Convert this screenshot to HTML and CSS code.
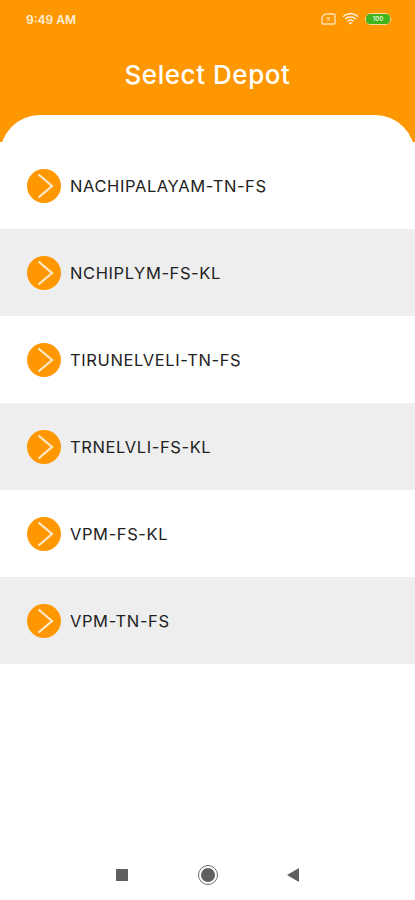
FILE: index.html
```html
<!DOCTYPE html>
<html>
<head>
  <title>Select Depot</title>
  <link rel="stylesheet" href="styles.css">
</head>
<body>
  <div class="screen">
    <div class="header">
      <div class="status-bar">
        <span class="clock">9:49 AM</span>
        <div class="status-icons">
          <svg class="icon-sim" width="15" height="12" viewBox="0 0 15 12">
            <path d="M4 1h9a1 1 0 0 1 1 1v8a1 1 0 0 1-1 1H2a1 1 0 0 1-1-1V4z" fill="none" stroke="#ffe2b3" stroke-width="1.4"/>
            <path d="M6 4.5l3 3M9 4.5l-3 3" stroke="#ffe2b3" stroke-width="1.2"/>
          </svg>
          <svg class="icon-wifi" width="17" height="12" viewBox="0 0 17 12">
            <path d="M1 3.6a11 11 0 0 1 15 0M3.2 6a7.8 7.8 0 0 1 10.6 0M5.4 8.3a4.6 4.6 0 0 1 6.2 0" fill="none" stroke="#fff" stroke-width="1.2"/>
            <path d="M6.9 9.9a2.4 2.4 0 0 1 3.2 0L8.5 11.6z" fill="#fff"/>
          </svg>
          <div class="battery"><span class="battery-fill">100</span></div>
        </div>
      </div>
      <h1 class="title">Select Depot</h1>
      <div class="sheet-top"></div>
    </div>

    <div class="depot-list">
      <div class="depot-row">
        <svg class="arrow" viewBox="0 0 34 34"><circle cx="17" cy="17" r="17"/><path d="M11.5 5.5L25 17 11.5 28.5"/></svg>
        <span class="depot-name">NACHIPALAYAM-TN-FS</span>
      </div>
      <div class="depot-row">
        <svg class="arrow" viewBox="0 0 34 34"><circle cx="17" cy="17" r="17"/><path d="M11.5 5.5L25 17 11.5 28.5"/></svg>
        <span class="depot-name">NCHIPLYM-FS-KL</span>
      </div>
      <div class="depot-row">
        <svg class="arrow" viewBox="0 0 34 34"><circle cx="17" cy="17" r="17"/><path d="M11.5 5.5L25 17 11.5 28.5"/></svg>
        <span class="depot-name">TIRUNELVELI-TN-FS</span>
      </div>
      <div class="depot-row">
        <svg class="arrow" viewBox="0 0 34 34"><circle cx="17" cy="17" r="17"/><path d="M11.5 5.5L25 17 11.5 28.5"/></svg>
        <span class="depot-name">TRNELVLI-FS-KL</span>
      </div>
      <div class="depot-row">
        <svg class="arrow" viewBox="0 0 34 34"><circle cx="17" cy="17" r="17"/><path d="M11.5 5.5L25 17 11.5 28.5"/></svg>
        <span class="depot-name">VPM-FS-KL</span>
      </div>
      <div class="depot-row">
        <svg class="arrow" viewBox="0 0 34 34"><circle cx="17" cy="17" r="17"/><path d="M11.5 5.5L25 17 11.5 28.5"/></svg>
        <span class="depot-name">VPM-TN-FS</span>
      </div>
    </div>

    <div class="nav-bar">
      <div class="nav-square"></div>
      <div class="nav-home"><div class="nav-home-dot"></div></div>
      <div class="nav-back"></div>
    </div>
  </div>
</body>
</html>
```

FILE: styles.css
```css
body {
  margin: 0;
  padding: 0;
  background-color: #fff;
  font-family: Inter, "Open Sans", Arial, sans-serif;
}

.screen {
  width: 415px;
  height: 900px;
  display: flex;
  flex-direction: column;
  overflow: hidden;
}

.header {
  height: 142px;
  background-color: #ff9800;
  display: flex;
  flex-direction: column;
  flex-shrink: 0;
  overflow: hidden;
}

.status-bar {
  height: 14px;
  margin-top: 12px;
  padding: 0 24px 0 26px;
  display: flex;
  align-items: center;
  justify-content: space-between;
}

.clock {
  font-size: 12px;
  font-weight: 600;
  color: #ffefd8;
}

.status-icons {
  display: flex;
  align-items: center;
  gap: 6px;
}

.battery {
  width: 26px;
  height: 12px;
  box-sizing: border-box;
  border: 1.5px solid #ffdca6;
  border-radius: 6px;
  padding: 0;
  display: flex;
}

.battery-fill {
  flex-grow: 1;
  background-color: #43b51c;
  border-radius: 4px;
  color: #e8f7dc;
  font-size: 6px;
  font-weight: 600;
  line-height: 9px;
  text-align: center;
}

.title {
  margin: 32px 0 0;
  height: 34px;
  font-size: 26px;
  font-weight: 500;
  line-height: 34px;
  letter-spacing: 0.55px;
  color: #fff;
  text-align: center;
}

/* taller than the header, the bottom of the corners gets clipped */
.sheet-top {
  margin-top: 23px;
  height: 60px;
  flex-shrink: 0;
  background-color: #fff;
  border-radius: 40px 40px 0 0;
}

.depot-row {
  height: 87px;
  padding-left: 27px;
  display: flex;
  align-items: center;
  background-color: #fff;
}

.depot-row:nth-child(even) {
  background-color: #eeeeee;
}

.arrow {
  width: 34px;
  height: 34px;
  margin-right: 9px;
  flex-shrink: 0;
}

.arrow circle {
  fill: #ff9800;
}

.arrow path {
  fill: none;
  stroke: #ffe9cc;
  stroke-width: 2.2;
}

.depot-name {
  font-size: 16.5px;
  font-weight: 400;
  color: #222;
  letter-spacing: 0.6px;
}

.nav-bar {
  margin-top: auto;
  height: 50px;
  padding: 0 116px;
  display: flex;
  align-items: center;
  justify-content: space-between;
}

.nav-square {
  width: 12px;
  height: 12px;
  background-color: #5f5f5f;
}

.nav-home {
  width: 20px;
  height: 20px;
  box-sizing: border-box;
  border: 1px solid #6d6d6d;
  border-radius: 50%;
  display: flex;
  align-items: center;
  justify-content: center;
}

.nav-home-dot {
  width: 14px;
  height: 14px;
  border-radius: 50%;
  background-color: #5f5f5f;
}

.nav-back {
  width: 0;
  height: 0;
  border-top: 7px solid transparent;
  border-bottom: 7px solid transparent;
  border-right: 12px solid #5f5f5f;
}
```
